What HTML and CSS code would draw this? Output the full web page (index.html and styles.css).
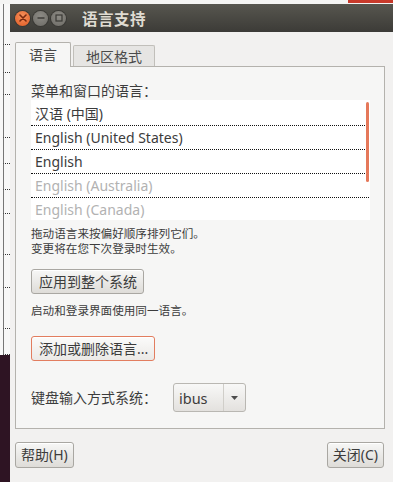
FILE: index.html
```html
<!DOCTYPE html>
<html lang="zh-CN">
<head>
  <meta charset="UTF-8" />
  <meta name="viewport" content="width=device-width, initial-scale=1" />
  <title>语言支持</title>
  <link rel="stylesheet" href="styles.css">
</head>
<body>

  <div class="behind-top">
    <span class="behind-red"></span>
  </div>

  <div class="desk">
    <!-- window behind, only a sliver visible -->
    <div class="behind-left">
      <div class="b-row h60"></div>
      <div class="b-row h27"></div>
      <div class="b-row h21"></div>
      <div class="b-row h42"></div>
      <div class="b-row h25"></div>
      <div class="b-row h25"></div>
      <div class="b-row h23"></div>
      <div class="b-row h60"></div>
      <div class="b-row h32"></div>
      <div class="b-row h60"></div>
      <div class="b-row h25"></div>
      <div class="b-dark"></div>
    </div>

    <div class="window">
      <div class="titlebar">
        <div class="controls">
          <span class="wbtn close">
            <svg width="8" height="8" viewBox="0 0 8 8"><path d="M1 1L7 7M7 1L1 7" stroke="#7a2a10" stroke-width="1.6" stroke-linecap="round"/></svg>
          </span>
          <span class="wbtn">
            <svg width="8" height="8" viewBox="0 0 8 8"><path d="M0.5 4H7.5" stroke="#3a3935" stroke-width="1.4"/></svg>
          </span>
          <span class="wbtn">
            <svg width="8" height="8" viewBox="0 0 8 8"><rect x="1" y="1" width="6" height="6" fill="none" stroke="#3a3935" stroke-width="1.2"/></svg>
          </span>
        </div>
        <div class="title">语言支持</div>
      </div>

      <div class="content">
        <div class="tabs">
          <div class="tab active">语言</div>
          <div class="tab">地区格式</div>
        </div>

        <div class="panel">
          <div class="label">菜单和窗口的语言：</div>

          <div class="langlist">
            <div class="lang">汉语 (中国)</div>
            <div class="lang">English (United States)</div>
            <div class="lang">English</div>
            <div class="lang muted">English (Australia)</div>
            <div class="lang muted last">English (Canada)</div>
            <span class="scrollbar"></span>
          </div>

          <p class="hint">拖动语言来按偏好顺序排列它们。<br>变更将在您下次登录时生效。</p>

          <button class="btn apply">应用到整个系统</button>

          <p class="hint single">启动和登录界面使用同一语言。</p>

          <button class="btn focus">添加或删除语言...</button>

          <div class="im-row">
            <span class="label">键盘输入方式系统：</span>
            <div class="combo">
              <span class="combo-text">ibus</span>
              <span class="combo-arrow">
                <svg width="7" height="4" viewBox="0 0 7 4"><path d="M0 0H7L3.5 4Z" fill="#4c4c4c"/></svg>
              </span>
            </div>
          </div>
        </div>

        <div class="actions">
          <button class="btn">帮助(H)</button>
          <button class="btn">关闭(C)</button>
        </div>
      </div>
    </div>
  </div>

</body>
</html>
```

FILE: styles.css
```css
html, body {
  margin: 0;
  padding: 0;
}

body {
  width: 393px;
  height: 482px;
  overflow: hidden;
  background: #f7f7f7;
  font-family: "Noto Sans", "Noto Sans CJK SC", sans-serif;
  color: #3c3c3c;
}

.behind-top {
  height: 4px;
  display: flex;
  justify-content: flex-end;
  background: #f4f4f3;
}

.behind-red {
  width: 45px;
  height: 3px;
  background: #c8392a;
}

.desk {
  display: flex;
  height: 478px;
}

.behind-left {
  width: 10px;
  display: flex;
  flex-direction: column;
  background: #f8f8f8;
  border-left: 3px solid #f8f8f8;
  box-sizing: border-box;
}

.b-row {
  border-bottom: 1px dotted #333;
  border-left: 1px solid #777;
}

.h60 { height: 40px; }
.h27 { height: 27px; }
.h21 { height: 21px; }
.h42 { height: 42px; }
.h25 { height: 25px; }
.h23 { height: 23px; }
.h32 { height: 32px; }

.b-dark {
  flex: 1;
  margin-left: -3px;
  background: #2e1423;
}

/* dialog window */
.window {
  flex: 1;
  display: flex;
  flex-direction: column;
  background: #f2f1f0;
}

.titlebar {
  height: 28px;
  display: flex;
  align-items: center;
  background: linear-gradient(#57564f, #3c3b37);
}

.controls {
  display: flex;
  gap: 3px;
  padding-left: 5px;
}

.wbtn {
  width: 15px;
  height: 15px;
  border-radius: 50%;
  background: radial-gradient(circle at 50% 35%, #8d8b85, #6c6a65);
  display: flex;
  align-items: center;
  justify-content: center;
  box-shadow: 0 0 0 1px #3a3935;
}

.wbtn.close {
  background: radial-gradient(circle at 50% 35%, #f7915c, #e05a22);
}

.title {
  margin-left: 16px;
  color: #dfdbd2;
  font-size: 15.5px;
  font-weight: bold;
  letter-spacing: 0.5px;
}

.content {
  flex: 1;
  display: flex;
  flex-direction: column;
  padding: 10px 8px 0 5px;
}

.tabs {
  display: flex;
  align-items: flex-end;
  gap: 2px;
  margin-bottom: -1px;
}

.tab {
  font-size: 14px;
  line-height: 20px;
  padding: 1px 12px 0;
  border: 1px solid #c1bfba;
  border-bottom: none;
  border-radius: 2px 2px 0 0;
  background: #e6e5e3;
  color: #4a4a4a;
}

.tab.active {
  padding: 2px 13px 2px;
  background: #f6f6f5;
  border-color: #b4b2ad;
  position: relative;
}

.panel {
  height: 363px;
  box-sizing: border-box;
  border: 1px solid #b4b2ad;
  background: #f6f6f5;
  padding: 15px 14px 0 15px;
  display: flex;
  flex-direction: column;
  align-items: flex-start;
}

.label {
  font-size: 14px;
  line-height: 18px;
  color: #3c3c3c;
}

.langlist {
  position: relative;
  align-self: stretch;
  margin-top: 0;
  padding-top: 2px;
  background: #fff;
  height: 120px;
  box-sizing: border-box;
}

.lang {
  height: 24px;
  box-sizing: border-box;
  padding: 1px 0 0 4px;
  font-size: 14px;
  line-height: 21px;
  color: #3c3c3c;
  border-bottom: 1px dotted #111;
  margin-right: 1px;
}

.lang.muted {
  color: #b2b2b2;
}

.lang.last {
  border-bottom: none;
}

.scrollbar {
  position: absolute;
  top: 2px;
  right: 1px;
  width: 3px;
  height: 80px;
  border-radius: 2px;
  background: #e5785a;
}

.hint {
  margin: 6px 0 0;
  font-size: 11.6px;
  line-height: 15px;
  color: #3c3c3c;
}

.hint.single {
  margin-top: 9px;
}

.btn {
  font-family: inherit;
  font-size: 14px;
  line-height: 18px;
  color: #3c3c3c;
  padding: 3px 6px 2px 7px;
  border: 1px solid #a9a7a2;
  border-radius: 3px;
  background: linear-gradient(#f7f7f6, #dedcd8);
  box-shadow: inset 0 1px 0 #fff;
}

.btn.apply {
  margin-top: 13px;
}

.btn.focus {
  margin-top: 18px;
  border-color: #e27d5f;
  background: linear-gradient(#fbfbfa, #ebe9e6);
}

.im-row {
  margin-top: 22px;
  display: flex;
  align-items: center;
  gap: 16px;
}

.combo {
  display: flex;
  align-items: center;
  height: 29px;
  width: 73px;
  box-sizing: border-box;
  border: 1px solid #b9b7b2;
  border-radius: 3px;
  background: linear-gradient(#f8f8f7, #e3e1de);
}

.combo-text {
  flex: 1;
  padding-left: 5px;
  font-size: 14.5px;
  color: #3c3c3c;
}

.combo-arrow {
  width: 21px;
  height: 100%;
  border-left: 1px solid #d0cec9;
  display: flex;
  align-items: center;
  justify-content: center;
}

.actions {
  display: flex;
  justify-content: space-between;
  margin-top: 13px;
  padding-right: 1px;
}

.actions .btn {
  height: 26px;
  padding: 0 5px;
  font-size: 14px;
}
```
